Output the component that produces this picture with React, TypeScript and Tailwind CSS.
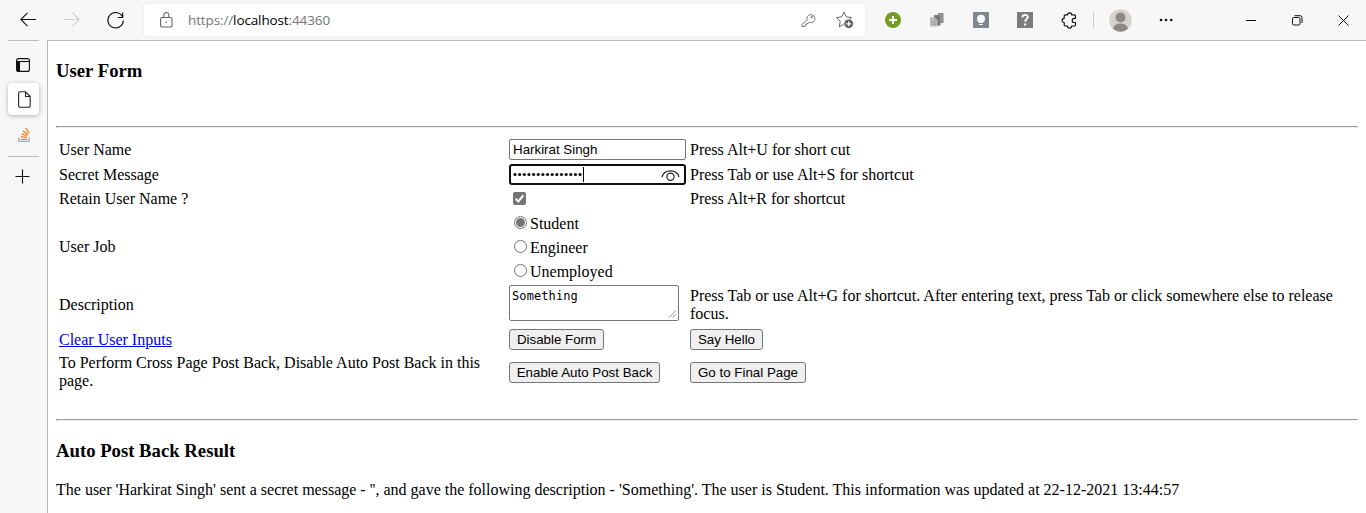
import type { ReactNode } from "react";

function BrowserBar() {
  return (
    <header className="flex h-10 shrink-0 items-center bg-[#f7f7f7]">
      <div className="flex w-[144px] shrink-0 items-center pl-5">
        <svg width="16" height="16" viewBox="0 0 16 16" fill="none" stroke="#111" strokeWidth="1.1">
          <path d="M16 7.500H.8M7.500.8.8 7.500l6.700 6.700" />
        </svg>
        <svg className="ml-[28px]" width="16" height="16" viewBox="0 0 16 16" fill="none" stroke="#cfcfcf" strokeWidth="1.1">
          <path d="M0 7.500h15.200M8.500.8l6.700 6.700-6.700 6.700" />
        </svg>
        <svg className="ml-[27px]" width="17" height="17" viewBox="0 0 17 17" fill="none" stroke="#111" strokeWidth="1.2">
          <path d="M15.800 5.500A7.700 7.700 0 1 0 16.300 8.500M15.700.5v5h-5" />
        </svg>
      </div>
      <div className="flex h-8 w-[721px] shrink-0 items-center rounded bg-white pl-4 shadow-[0_0_4px_rgba(0,0,0,0.05)]">
        <svg width="13" height="16" viewBox="0 0 13 16" fill="none" stroke="#666" strokeWidth="1.100">
          <rect x=".6" y="5.500" width="11.400" height="9.500" rx="1.500" />
          <path d="M3.800 5.500V3a2.500 2.500 0 0 1 5 0v2.500" />
          <circle cx="6.300" cy="10.200" r=".8" fill="#666" stroke="none" />
        </svg>
        <span className="ml-[15px] w-[614px] whitespace-nowrap font-['Open_Sans',sans-serif] text-[13.5px] leading-5 tracking-[-0.12px] text-[#767676]">
          https://<span className="text-black">localhost</span>:44360
        </span>
        <svg className="-ml-px" width="15" height="15" viewBox="0 0 15 15" fill="none" stroke="#777" strokeWidth="1">
          <path d="M6.200 7.200A4 4 0 1 1 8.300 9.300L7 10.500H5.500V12H4v1.500H1v-2.300z" strokeLinejoin="round" />
          <circle cx="10.800" cy="4.100" r=".8" />
        </svg>
        <svg className="ml-5" width="18" height="18" viewBox="0 0 18 18" fill="none" stroke="#666" strokeWidth="1">
          <path d="m8 1 2.200 4.800 5.300.7-3.900 3.600.9 4.900L8 12.800 3.300 16l.9-5.600L.6 6.500l5.200-.7z" strokeLinejoin="round" />
          <circle cx="12.700" cy="12.800" r="4.700" fill="#606060" stroke="#fff" strokeWidth=".6" />
          <path d="M12.700 10.300v5M10.200 12.800h5" stroke="#fff" strokeWidth="1.200" />
        </svg>
      </div>
      <svg className="ml-5 shrink-0" width="16" height="16" viewBox="0 0 16 16">
        <circle cx="8" cy="8" r="8" fill="#759d22" />
        <path d="M8 4v8M4 8h8" stroke="#fff" strokeWidth="2" />
      </svg>
      <svg className="ml-[28px] shrink-0" width="16" height="16" viewBox="0 0 16 16">
        <path d="M9 1h5.500v10H9z" fill="#8c8c8c" />
        <path d="M5 3h6.500v10.500H5z" fill="#777" stroke="#aaa" strokeWidth=".5" />
        <path d="M1 5h4.500l3 3v6.500H1z" fill="#bcbcbc" />
        <path d="M5.500 5v3h3M3 10h3.500v2.500H3zM11 4h2M11 7h2" fill="none" stroke="#a3a3a3" />
      </svg>
      <svg className="ml-[28px] shrink-0" width="16" height="16" viewBox="0 0 16 16">
        <rect width="16" height="16" rx="1" fill="#80868f" />
        <circle cx="8" cy="6.800" r="4" fill="#fff" />
        <path d="M6 9h4v2H6zM6 12h4v1H6z" fill="#fff" />
      </svg>
      <svg className="ml-[28px] shrink-0" width="16" height="16" viewBox="0 0 16 16">
        <path d="M0 0h16v16H0z" fill="#7c7c7c" />
        <path d="M5.400 5.500c0-3.400 5.400-3.400 5.400-.4 0 2-2.700 2-2.700 4.700" fill="none" stroke="#fff" strokeWidth="1.900" />
        <path d="M7 11.500h2.200v2H7z" fill="#fff" />
      </svg>
      <svg className="ml-[28px] shrink-0" width="17" height="17" viewBox="0 0 17 17" fill="none" stroke="#111" strokeWidth="1.150" strokeLinejoin="round">
        <path d="M4.500 2.900h2a2.100 2.100 0 0 1 4.200 0h2.500a1.300 1.300 0 0 1 1.300 1.300v2.100h-1.200a2.100 2.100 0 0 0 0 4.200h1.200v2.200a1.300 1.300 0 0 1-1.300 1.300h-2.500a2.100 2.100 0 0 1-4.200 0h-2a1.300 1.300 0 0 1-1.300-1.300v-2.200a2.100 2.100 0 0 1 0-4.200V4.200a1.300 1.300 0 0 1 1.300-1.300z" />
      </svg>
      <div className="ml-[15px] h-4 w-px bg-[#cfcfcf]" />
      <svg className="ml-[15px] shrink-0" width="23" height="23" viewBox="0 0 23 23">
        <circle cx="11.500" cy="11.500" r="11.300" fill="#d5d3d0" />
        <circle cx="11.500" cy="8.500" r="5" fill="#8b8885" />
        <path d="M4 19.800c1.500-7 13.500-7 15 0a11.300 11.300 0 0 1-15 0z" fill="#8b8885" />
      </svg>
      <svg className="ml-[27px] shrink-0" width="16" height="4" viewBox="0 0 16 4" fill="#111">
        <circle cx="2" cy="2" r="1.300" /><circle cx="7" cy="2" r="1.300" /><circle cx="12.200" cy="2" r="1.300" />
      </svg>
      <svg className="ml-[71px] shrink-0" width="10" height="11" viewBox="0 0 10 11"><path d="M0 5.500h10" stroke="#111" /></svg>
      <svg className="ml-[36px] shrink-0" width="11" height="11" viewBox="0 0 11 11" fill="none" stroke="#111">
        <rect x=".5" y="2.500" width="7.500" height="7.500" rx="1.300" />
        <path d="M2.500.7H8a2 2 0 0 1 2 2V8" />
      </svg>
      <svg className="ml-[35px] shrink-0" width="11" height="11" viewBox="0 0 11 11" stroke="#111" strokeWidth="1"><path d="m.5.5 10 10m0-10-10 10" /></svg>
    </header>
  );
}

function SideTabs() {
  return (
    <nav className="flex w-[47px] shrink-0 flex-col items-center bg-[#f7f7f7]">
      <div className="h-px w-[31px] bg-[#bdbdbd]" />
      <svg className="mr-[1.5px] mt-[17px] shrink-0" width="14" height="14" viewBox="0 0 14 14" fill="none" stroke="#111" strokeWidth="1.100">
        <rect x=".6" y=".6" width="12.800" height="12.800" rx="2" />
        <path d="M.6 3.500h12.800" />
        <path d="M1 3.500h2.500v10H2.500L1 12z" fill="#111" />
      </svg>
      <div className="mt-[11px] flex h-8 w-[31px] shrink-0 items-center justify-center rounded bg-white pl-px shadow-[0_1px_4px_rgba(0,0,0,0.3)]">
        <svg width="13" height="17" viewBox="0 0 13 17" fill="none" stroke="#222" strokeWidth="1.100">
          <path d="M2 .8h5.500l4.700 4.700v9.200a1.500 1.500 0 0 1-1.500 1.500H2A1.500 1.500 0 0 1 .6 14.700V2.300A1.500 1.500 0 0 1 2 .8zM7.500.8v4.700h4.700" />
        </svg>
      </div>
      <svg className="ml-px mt-[12px] shrink-0" width="13" height="15" viewBox="0 0 13 15" fill="none" strokeWidth="1.300">
        <path d="M1 10.500v4h10v-4" stroke="#aaa" />
        <path d="M3 12.300h6M3 9.700l6.200.6M3.500 6.900l6 1.700M5 3.900l5.100 3.300M8 1l3.200 5.200" stroke="#f48024" />
      </svg>
      <div className="mt-[14px] h-px w-[31px] shrink-0 bg-[#bdbdbd]" />
      <svg className="mr-[2px] mt-[12px] shrink-0" width="15" height="15" viewBox="0 0 15 15" stroke="#111" strokeWidth="1.100"><path d="M7.500.5v14M.5 7.500h14" /></svg>
    </nav>
  );
}

function FormButton({ children, width }: { children: ReactNode; width: string }) {
  return (
    <button className={`${width} block h-[21px] whitespace-nowrap rounded-[3px] border border-[#767676] bg-[#efefef] text-center font-['Liberation_Sans',Arial,sans-serif] text-[13.333px] leading-[19px] text-black`}>
      {children}
    </button>
  );
}

function Job({ label, checked = false }: { label: string; checked?: boolean }) {
  return (
    <label className="flex h-6 items-center pl-[5px]">
      <span className="mb-px flex size-[13px] items-center justify-center rounded-full border border-[#767676] bg-white">
        {checked && <span className="size-[9px] rounded-full bg-[#767676]" />}
      </span>
      <span className="ml-[3px] pt-px">{label}</span>
    </label>
  );
}

function UserForm() {
  return (
    <div className="mt-[10px] grid grid-cols-[450px_181px_1fr] grid-rows-[24px_25px_24px_72px_43px_27px_37px] items-center pl-[3px]">
      <div>User Name</div>
      <div className="mb-[2px] flex h-[21px] w-[177px] items-center rounded-[2px] border border-[#767676] pl-[3px] pt-px font-['Liberation_Sans',Arial,sans-serif] text-[13.333px]">Harkirat Singh</div>
      <div>Press Alt+U for short cut</div>

      <div>Secret Message</div>
      <div className="flex h-[21px] w-[177px] items-center rounded-[3px] border-2 border-[#101010] pl-0.5">
        <svg width="70" height="6" viewBox="0 0 70 6" fill="#111">
          {Array.from({ length: 15 }, (_, i) => <circle key={i} cx={2 + i * 4.65} cy="2.500" r="1.600" />)}
        </svg>
        <span className="h-[15px] w-px bg-black" />
        <svg className="ml-auto mr-1 mt-0.5" width="19" height="13" viewBox="0 0 19 13" fill="none" stroke="#222" strokeWidth="1.200">
          <path d="M1 8c2-8.300 15-8.300 17 0" />
          <circle cx="9.500" cy="7.800" r="3.600" />
        </svg>
      </div>
      <div>Press Tab or use Alt+S for shortcut</div>

      <div>Retain User Name ?</div>
      <svg className="mb-px ml-1" width="13" height="13" viewBox="0 0 13 13">
        <rect width="13" height="13" rx="2" fill="#767676" />
        <path d="m2.700 6.800 2.600 2.600 5-6" fill="none" stroke="#fff" strokeWidth="2" />
      </svg>
      <div>Press Alt+R for shortcut</div>

      <div>User Job</div>
      <div>
        <Job label="Student" checked />
        <Job label="Engineer" />
        <Job label="Unemployed" />
      </div>
      <div />

      <div>Description</div>
      <div className="mb-[3px] flex h-9 w-[170px] items-start justify-between rounded-[2px] border border-[#767676] pl-0.5 pt-[3px] font-['DejaVu_Sans_Mono',monospace] text-[12px] leading-[14px] tracking-[0.1px]">
        <span>Something</span>
        <svg className="mr-px self-end pb-px" width="9" height="10" viewBox="0 0 9 10" stroke="#777" strokeWidth=".9"><path d="m.5 8.500 8-8m-4 8 4-4" /></svg>
      </div>
      <div>
        <p className="whitespace-nowrap">Press Tab or use Alt+G for shortcut. After entering text, press Tab or click somewhere else to release</p>
        <p>focus.</p>
      </div>

      <a className="pt-px text-[#0000ee] underline">Clear User Inputs</a>
      <FormButton width="w-[95px]">Disable Form</FormButton>
      <FormButton width="w-[73px]">Say Hello</FormButton>

      <div>
        <p className="whitespace-nowrap">To Perform Cross Page Post Back, Disable Auto Post Back in this</p>
        <p>page.</p>
      </div>
      <div className="pt-px"><FormButton width="w-[151px]">Enable Auto Post Back</FormButton></div>
      <div className="pt-px"><FormButton width="w-[116px]">Go to Final Page</FormButton></div>
    </div>
  );
}

export default function App() {
  return (
    <div className="flex h-[513px] w-[1366px] flex-col overflow-hidden bg-white">
      <BrowserBar />
      <div className="flex flex-1">
        <SideTabs />
        <main className="flex-1 border-l border-t border-[#b9b9b9] pl-2 pr-2 font-['Liberation_Serif','Times_New_Roman',serif] text-[16px] leading-[18px] text-black">
          <h3 className="mt-[19px] text-[18.72px] font-bold leading-[21px]">User Form</h3>
          <div className="mt-[45px] h-[2px] border border-b-[#eee] border-l-[#9a9a9a] border-r-[#eee] border-t-[#9a9a9a]" />
          <UserForm />
          <div className="mt-[29px] h-[2px] border border-b-[#eee] border-l-[#9a9a9a] border-r-[#eee] border-t-[#9a9a9a]" />
          <h3 className="mt-[19px] text-[18.72px] font-bold leading-[21px]">Auto Post Back Result</h3>
          <p className="mt-[20px] whitespace-nowrap">The user 'Harkirat Singh' sent a secret message - '', and gave the following description - 'Something'. The user is Student. This information was updated at 22-12-2021 13:44:57</p>
        </main>
      </div>
    </div>
  );
}
